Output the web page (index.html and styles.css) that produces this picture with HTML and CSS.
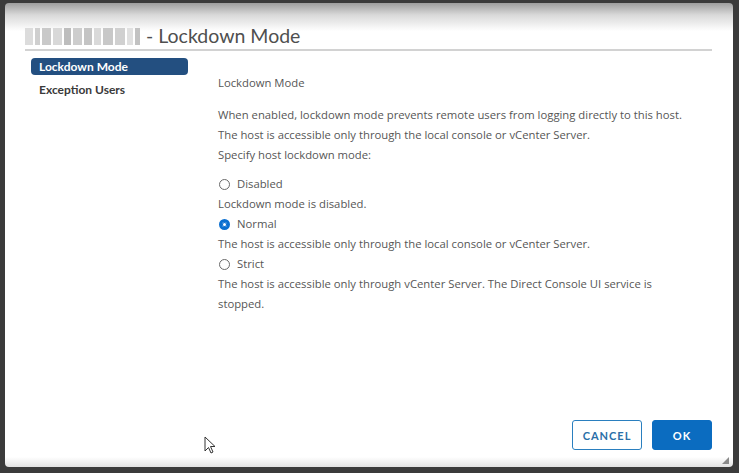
FILE: index.html
```html
<!DOCTYPE html>
<html>
<head>
<meta charset="utf-8">
<link rel="stylesheet" href="styles.css">
</head>
<body>
<div class="dialog">
  <div class="header">
    <div class="host" aria-hidden="true">
      <span class="b b1"></span><span class="b b2"></span><span class="b b3"></span><span class="b b4"></span><span class="b b5"></span><span class="b b6"></span><span class="b b7"></span><span class="b b8"></span><span class="b b9"></span><span class="b b10"></span><span class="b b11"></span><span class="b b12"></span>
    </div>
    <h1 class="title">- Lockdown Mode</h1>
  </div>
  <div class="body">
    <nav class="side">
      <div class="nav-item active">Lockdown Mode</div>
      <div class="nav-item">Exception Users</div>
    </nav>
    <main class="content">
      <div class="section-title">Lockdown Mode</div>
      <div class="para">
        <p>When enabled, lockdown mode prevents remote users from logging directly to this host.</p>
        <p>The host is accessible only through the local console or vCenter Server.</p>
        <p>Specify host lockdown mode:</p>
      </div>
      <div class="options">
        <label class="radio"><span class="dot"></span>Disabled</label>
        <p>Lockdown mode is disabled.</p>
        <label class="radio"><span class="dot checked"></span>Normal</label>
        <p>The host is accessible only through the local console or vCenter Server.</p>
        <label class="radio"><span class="dot"></span>Strict</label>
        <p class="wrap">The host is accessible only through vCenter Server. The Direct Console UI service is stopped.</p>
      </div>
    </main>
  </div>
  <div class="footer">
    <button class="btn btn-outline">CANCEL</button>
    <button class="btn btn-primary">OK</button>
  </div>
  <svg class="grip" width="7" height="7" viewBox="0 0 7 7"><path d="M7 0 L7 7 L0 7 Z" fill="#8a8a8a"/></svg>
  <svg class="cursor" width="13" height="19" viewBox="0 0 13 19"><path d="M1 1 L1 15 L4.5 11.5 L7 17 L9 16 L6.5 10.5 L11 10.5 Z" fill="#fff" stroke="#333" stroke-width="1"/></svg>
</div>
</body>
</html>
```

FILE: styles.css
```css
html, body {
  margin: 0;
  padding: 0;
}
body {
  background: #3b3b3b;
  width: 739px;
  height: 473px;
  overflow: hidden;
  font-family: "Open Sans", Lato, sans-serif;
  color: #565656;
}
.dialog {
  position: relative;
  box-sizing: border-box;
  margin: 3px 6px 0 5px;
  height: 464px;
  border-radius: 4px;
  background: linear-gradient(to bottom, #9e9e9e 0, #d9d9d9 12px, #ffffff 28px, #ffffff calc(100% - 10px), #e2e2e2 100%);
  display: flex;
  flex-direction: column;
}
.header {
  margin: 0 21px 0 20px;
  padding-top: 20px;
  height: 26px;
  border-bottom: 2px solid #d2d2d2;
  display: flex;
  align-items: center;
  gap: 6px;
}
.host {
  display: flex;
  align-items: center;
  gap: 2px;
  height: 17px;
  width: 115px;
}
.b {
  display: block;
  height: 17px;
  background: #d6d6d6;
}
.b1 { width: 8px; background: #dcdcdc; }
.b2 { width: 6px; background: #cfcfcf; }
.b3 { width: 9px; background: #c9c9c9; }
.b4 { width: 9px; background: #d8d8d8; }
.b5 { width: 8px; background: #bdbdbd; }
.b6 { width: 9px; background: #cdcdcd; }
.b7 { width: 8px; background: #c4c4c4; }
.b8 { width: 8px; background: #d9d9d9; }
.b9 { width: 10px; background: #c8c8c8; }
.b10 { width: 10px; background: #d0d0d0; }
.b11 { width: 7px; background: #e0e0e0; }
.b12 { width: 5px; background: #c2c2c2; }
.title {
  margin: 0;
  font-family: Lato, sans-serif;
  font-size: 19.5px;
  font-weight: 400;
  color: #4f4f4f;
  line-height: 24px;
}
.body {
  flex: 1;
  display: flex;
}
.side {
  width: 157px;
  margin-left: 26px;
  padding-top: 7px;
  display: flex;
  flex-direction: column;
  gap: 6px;
}
.nav-item {
  font-family: Lato, sans-serif;
  font-size: 12px;
  font-weight: 700;
  color: #3a3a3a;
  line-height: 17px;
  padding-left: 8px;
  border-radius: 4px;
}
.nav-item.active {
  background: #234f80;
  color: #fff;
}
.content {
  margin-left: 30px;
  padding-top: 22px;
  font-size: 11.3px;
  line-height: 20px;
}
.content p {
  margin: 0;
}
.section-title {
  margin-bottom: 12px;
}
.options {
  margin-top: 9px;
}
.wrap {
  width: 450px;
}
.radio {
  display: flex;
  align-items: center;
  gap: 7px;
  padding-left: 1px;
}
.dot {
  box-sizing: border-box;
  width: 11px;
  height: 11px;
  border-radius: 50%;
  border: 1px solid #6a6a6a;
  background: #fff;
}
.dot.checked {
  border: 3px solid #0a6fd0;
  background: #fff;
  box-shadow: inset 0 0 0 1px #0a6fd0;
}
.footer {
  display: flex;
  justify-content: flex-end;
  gap: 10px;
  padding: 0 21px 17px 0;
}
.btn {
  height: 30px;
  border-radius: 3px;
  font-family: Lato, "Open Sans", sans-serif;
  font-size: 11px;
  font-weight: 700;
  letter-spacing: 1px;
  cursor: pointer;
}
.btn-outline {
  width: 70px;
  background: #fff;
  border: 1px solid #2a7fbf;
  color: #2a6fa8;
}
.btn-primary {
  width: 60px;
  background: #0b6cc0;
  border: 1px solid #0b6cc0;
  color: #fff;
}
.grip {
  position: absolute;
  right: 4px;
  bottom: 3px;
}
.cursor {
  position: absolute;
  left: 199px;
  top: 433px;
}
```
